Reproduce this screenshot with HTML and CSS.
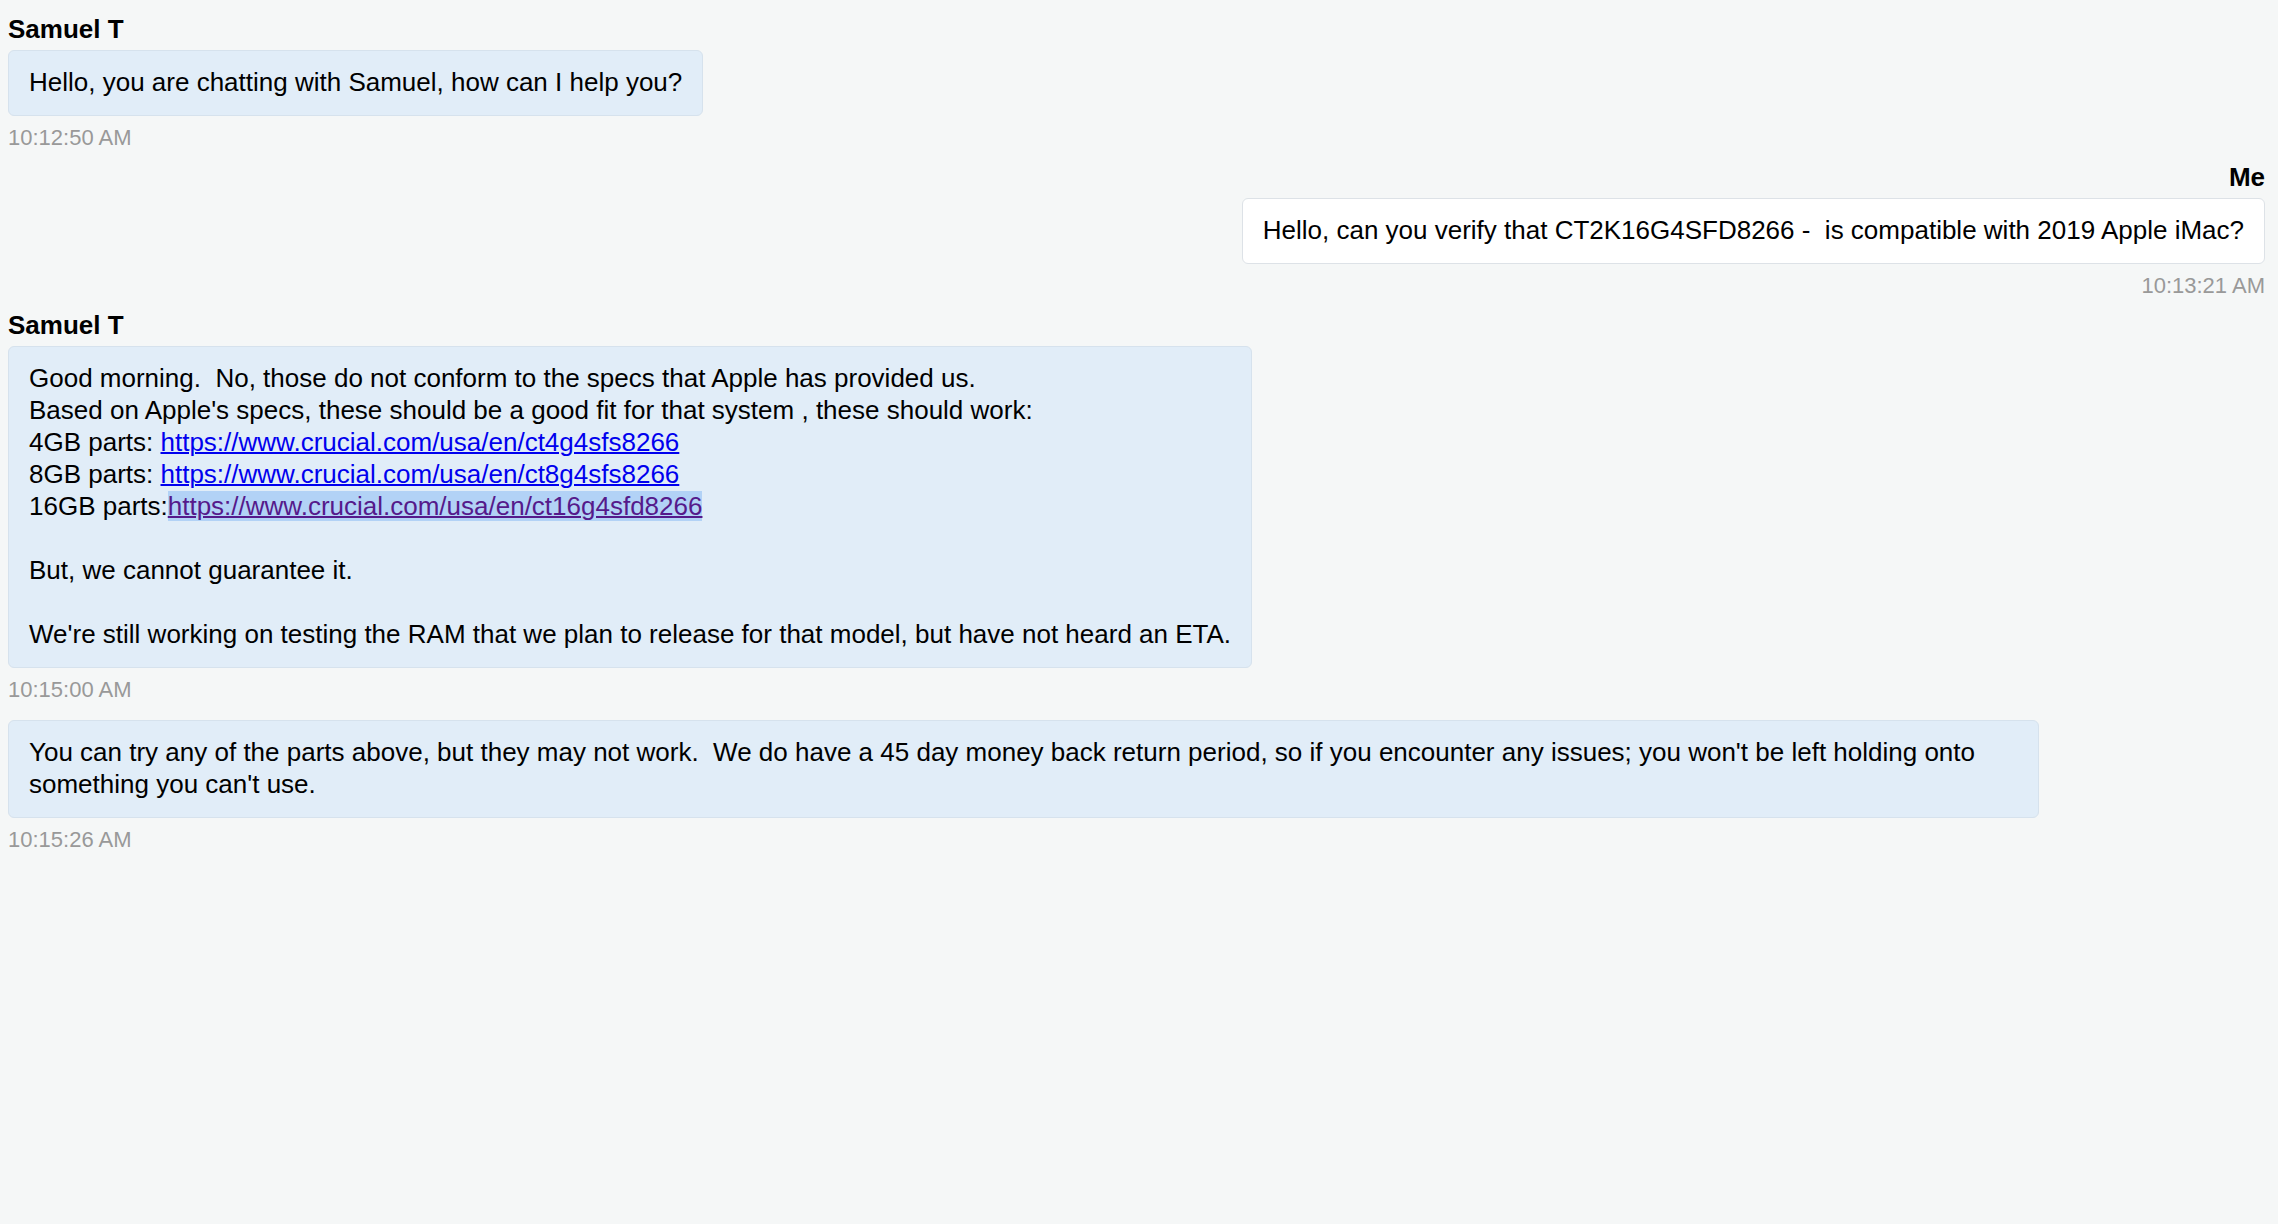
FILE: index.html
```html
<!DOCTYPE html>
<html lang="en">
<head>
    <meta charset="UTF-8">
    <meta name="viewport" content="width=device-width, initial-scale=1.0">
    <title>Chat Transcript</title>
    <link rel="stylesheet" href="styles.css">
</head>
<body>

<div class="chat">
    <div class="msg agent">
        <div class="sender">Samuel T</div>
        <div class="bubble">Hello, you are chatting with Samuel, how can I help you?</div>
        <div class="time">10:12:50 AM</div>
    </div>

    <div class="msg visitor">
        <div class="sender">Me</div>
        <div class="bubble">Hello, can you verify that CT2K16G4SFD8266 -  is compatible with 2019 Apple iMac?</div>
        <div class="time">10:13:21 AM</div>
    </div>

    <div class="msg agent">
        <div class="sender">Samuel T</div>
        <div class="bubble">Good morning.  No, those do not conform to the specs that Apple has provided us.<br>Based on Apple's specs, these should be a good fit for that system , these should work:<br>4GB parts: <a href="https://www.crucial.com/usa/en/ct4g4sfs8266">https://www.crucial.com/usa/en/ct4g4sfs8266</a><br>8GB parts: <a href="https://www.crucial.com/usa/en/ct8g4sfs8266">https://www.crucial.com/usa/en/ct8g4sfs8266</a><br>16GB parts:<span class="selected"><a class="visited" href="https://www.crucial.com/usa/en/ct16g4sfd8266">https://www.crucial.com/usa/en/ct16g4sfd8266</a></span><br><br>But, we cannot guarantee it.<br><br>We're still working on testing the RAM that we plan to release for that model, but have not heard an ETA.</div>
        <div class="time">10:15:00 AM</div>
        <div class="bubble">You can try any of the parts above, but they may not work.  We do have a 45 day money back return period, so if you encounter any issues; you won't be left holding onto something you can't use.</div>
        <div class="time">10:15:26 AM</div>
    </div>
</div>

</body>
</html>
```

FILE: styles.css
```css
body {
    font-family: "Liberation Sans", Arial, Helvetica, sans-serif;
    background-color: #f5f7f7;
    color: #000;
    margin: 0;
}
.chat {
    display: flex;
    flex-direction: column;
    gap: 10px;
    padding: 13px 13px 0 8px;
}
.msg {
    display: flex;
    flex-direction: column;
    align-items: flex-start;
}
.msg.visitor {
    align-items: flex-end;
}
.sender {
    font-size: 26px;
    line-height: 32px;
    font-weight: bold;
}
.bubble {
    max-width: 90%;
    margin-top: 5px;
    padding: 15px 20px 17px;
    font-size: 26px;
    line-height: 32px;
    white-space: pre-wrap;
    background-color: #e1edf8;
    border: 1px solid #d6e2ed;
    border-radius: 6px;
    box-sizing: border-box;
}
.visitor .bubble {
    background-color: #fff;
    border-color: #dde2e7;
}
.time + .bubble {
    margin-top: 17px;
}
.time {
    margin-top: 9px;
    font-size: 22px;
    line-height: 26px;
    color: #999;
}
.bubble a {
    color: #0000ee;
    text-decoration-thickness: 2px;
}
.bubble a.visited {
    color: #551a8b;
}
.selected {
    background-color: #b2d2f6;
}
```
